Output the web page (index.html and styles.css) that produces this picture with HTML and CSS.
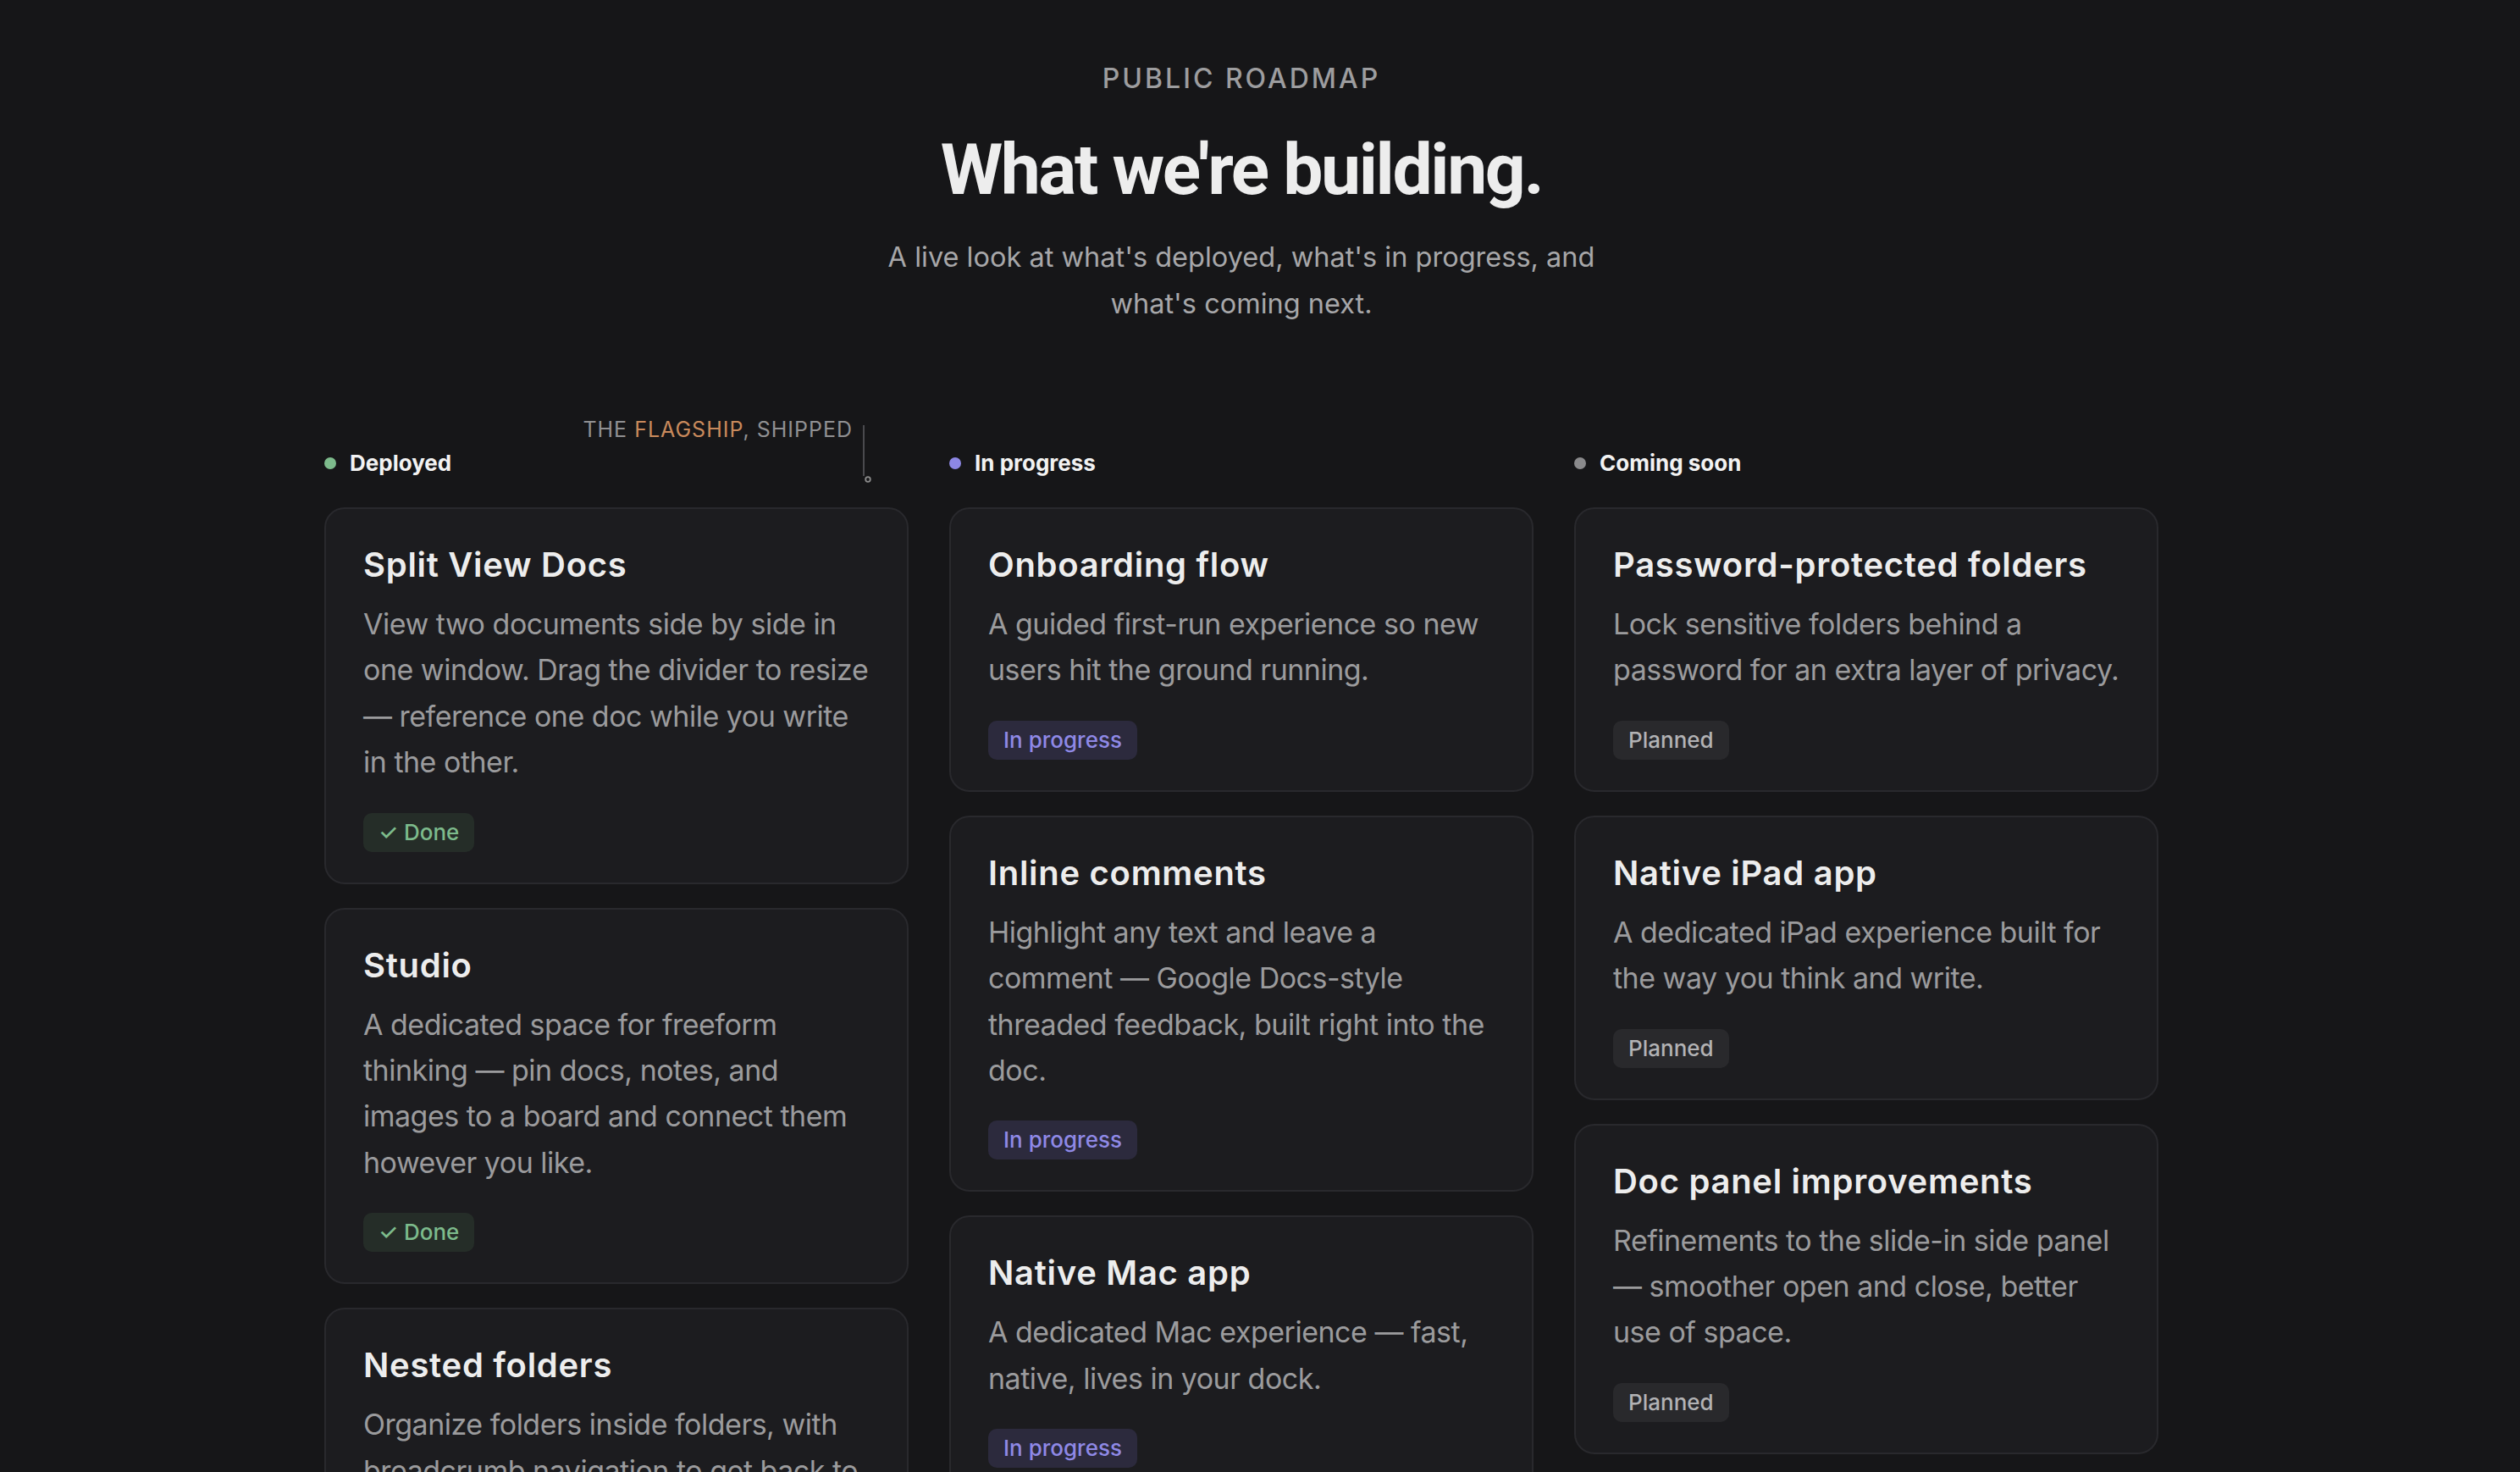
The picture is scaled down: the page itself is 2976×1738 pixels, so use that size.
FILE: index.html
```html
<!DOCTYPE html>
<html lang="en">
<head>
<meta charset="utf-8">
<title>Public Roadmap</title>
<link rel="stylesheet" href="styles.css">
</head>
<body>
<div class="page">
  <header class="intro">
    <p class="eyebrow">PUBLIC ROADMAP</p>
    <h1 class="headline">What we're building.</h1>
    <p class="lede">A live look at what's deployed, what's in progress, and what's coming next.</p>
  </header>

  <main class="board">
    <section class="column">
      <div class="column-head"><span class="dot dot-deployed"></span><span class="column-title">Deployed</span></div>
      <div class="callout">THE <span class="callout-accent">FLAGSHIP</span>, SHIPPED</div>
      <svg class="callout-pointer" width="25" height="80" viewBox="0 0 25 80" aria-hidden="true">
        <line x1="10" y1="8" x2="10" y2="68" stroke="#4a4a4e" stroke-width="2"/>
        <circle cx="15" cy="72" r="2.8" fill="none" stroke="#8c8c8c" stroke-width="1.8"/>
      </svg>
      <div class="cards">
        <article class="card">
          <h2 class="card-title">Split View Docs</h2>
          <p class="card-text">View two documents side by side in one window. Drag the divider to resize — reference one doc while you write in the other.</p>
          <div class="card-foot"><span class="badge badge-done">✓ Done</span></div>
        </article>
        <article class="card">
          <h2 class="card-title">Studio</h2>
          <p class="card-text">A dedicated space for freeform thinking — pin docs, notes, and images to a board and connect them however you like.</p>
          <div class="card-foot"><span class="badge badge-done">✓ Done</span></div>
        </article>
        <article class="card">
          <h2 class="card-title">Nested folders</h2>
          <p class="card-text">Organize folders inside folders, with breadcrumb navigation to get back to where you started.</p>
          <div class="card-foot"><span class="badge badge-done">✓ Done</span></div>
        </article>
      </div>
    </section>

    <section class="column">
      <div class="column-head"><span class="dot dot-progress"></span><span class="column-title">In progress</span></div>
      <div class="cards">
        <article class="card">
          <h2 class="card-title">Onboarding flow</h2>
          <p class="card-text">A guided first-run experience so new users hit the ground running.</p>
          <div class="card-foot"><span class="badge badge-progress">In progress</span></div>
        </article>
        <article class="card">
          <h2 class="card-title">Inline comments</h2>
          <p class="card-text">Highlight any text and leave a comment — Google Docs-style threaded feedback, built right into the doc.</p>
          <div class="card-foot"><span class="badge badge-progress">In progress</span></div>
        </article>
        <article class="card">
          <h2 class="card-title">Native Mac app</h2>
          <p class="card-text">A dedicated Mac experience — fast, native, lives in your dock.</p>
          <div class="card-foot"><span class="badge badge-progress">In progress</span></div>
        </article>
      </div>
    </section>

    <section class="column">
      <div class="column-head"><span class="dot dot-soon"></span><span class="column-title">Coming soon</span></div>
      <div class="cards">
        <article class="card">
          <h2 class="card-title">Password-protected folders</h2>
          <p class="card-text">Lock sensitive folders behind a password for an extra layer of privacy.</p>
          <div class="card-foot"><span class="badge badge-planned">Planned</span></div>
        </article>
        <article class="card">
          <h2 class="card-title">Native iPad app</h2>
          <p class="card-text">A dedicated iPad experience built for the way you think and write.</p>
          <div class="card-foot"><span class="badge badge-planned">Planned</span></div>
        </article>
        <article class="card">
          <h2 class="card-title">Doc panel improvements</h2>
          <p class="card-text">Refinements to the slide-in side panel — smoother open and close, better use of space.</p>
          <div class="card-foot"><span class="badge badge-planned">Planned</span></div>
        </article>
        <article class="card">
          <h2 class="card-title">Offline mode</h2>
          <p class="card-text">Keep writing without a connection and sync when you're back online.</p>
          <div class="card-foot"><span class="badge badge-planned">Planned</span></div>
        </article>
      </div>
    </section>
  </main>
</div>
</body>
</html>
```

FILE: styles.css
```css
html, body {
  margin: 0;
  padding: 0;
}

body {
  background: #161618;
  color: #ececec;
  font-family: Inter, "Noto Sans", "DejaVu Sans", sans-serif;
  height: 1738px;
  overflow: hidden;
}

.page {
  width: 2932px;
  padding-top: 73px;
}

.intro {
  text-align: center;
}

.eyebrow {
  margin: 0;
  font-size: 32px;
  line-height: 40px;
  font-weight: 500;
  letter-spacing: 3px;
  color: #9d9d9f;
}

.headline {
  margin: 42px 0 0;
  font-family: Roboto, "Liberation Sans", sans-serif;
  font-size: 84px;
  line-height: 92px;
  font-weight: 700;
  letter-spacing: -2.4px;
  color: #ededed;
}

.lede {
  margin: 29px auto 0;
  max-width: 880px;
  font-size: 32.5px;
  line-height: 55px;
  color: #a7a7a9;
}

.board {
  width: 2166px;
  margin: 143px auto 0;
  display: grid;
  grid-template-columns: repeat(3, 1fr);
  column-gap: 48px;
  align-items: start;
}

.column {
  position: relative;
  display: flex;
  flex-direction: column;
}

.column-head {
  display: flex;
  align-items: center;
  gap: 16px;
  height: 36px;
  margin-bottom: 34px;
}

.dot {
  width: 14px;
  height: 14px;
  border-radius: 50%;
  flex: none;
}

.dot-deployed { background: #7dbb8c; }
.dot-progress { background: #8d87e4; }
.dot-soon { background: #8a8a8c; }

.column-title {
  font-size: 26px;
  line-height: 36px;
  font-weight: 700;
  color: #f2f2f2;
}

.callout {
  position: absolute;
  right: 66px;
  top: -37px;
  font-size: 25px;
  line-height: 30px;
  letter-spacing: 1px;
  color: #909092;
  white-space: nowrap;
}

.callout-accent {
  color: #c98a5c;
}

.callout-pointer {
  position: absolute;
  right: 38px;
  top: -35px;
}

.cards {
  display: flex;
  flex-direction: column;
  gap: 28px;
}

.card {
  background: #1c1c1f;
  border: 2px solid #29292d;
  border-radius: 24px;
  padding: 42px 44px 36px;
}

.card-title {
  margin: 0 0 19px;
  font-size: 40px;
  line-height: 48px;
  font-weight: 600;
  letter-spacing: 0.7px;
  color: #ededed;
}

.card-text {
  margin: 0 0 32px;
  font-size: 34px;
  line-height: 54.4px;
  letter-spacing: -0.5px;
  color: #9b9b9d;
}

.card-foot {
  display: flex;
}

.badge {
  display: inline-block;
  font-size: 26px;
  line-height: 30px;
  font-weight: 500;
  padding: 8px 18px;
  border-radius: 10px;
}

.badge-done {
  background: #252d28;
  color: #7dbb8c;
}

.badge-progress {
  background: #2c2a3d;
  color: #8f89e6;
}

.badge-planned {
  background: #29292c;
  color: #b2b2b4;
}
```
